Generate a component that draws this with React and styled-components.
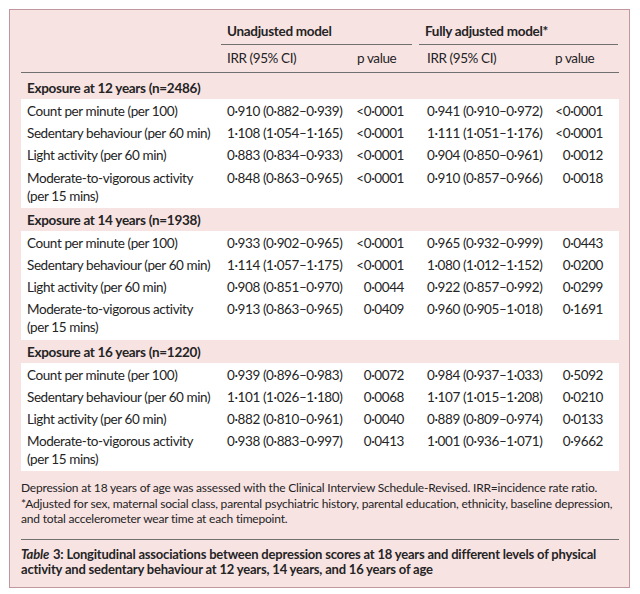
import React from "react";
import styled, { createGlobalStyle } from "styled-components";

const Global = createGlobalStyle`
  html, body { margin: 0; padding: 0; background: #ffffff; }
  body { font-family: Lato, "Open Sans", sans-serif; color: #242424; }
`;

const Page = styled.div`
  padding: 9px 0 0 9px;
  width: 640px;
  height: 594px;
  box-sizing: border-box;
`;

const Card = styled.div`
  width: 621px;
  box-sizing: border-box;
  background: #f8e3e3;
  border: 1px solid #bf979c;
  padding: 0 10px 10px 11px;
`;

const COLS = "200px 125px 52px 23px 125px 51px";

const GroupHead = styled.div`
  display: flex;
  padding-left: 200px;
  padding-top: 12px;
  gap: 7px;
`;

const GroupTitle = styled.div`
  width: ${(p) => p.$w}px;
  font-weight: 700;
  font-size: 13.5px;
  letter-spacing: -0.3px;
  line-height: 18px;
  padding: 0 0 4px 6px;
  border-bottom: 1px solid #707070;
`;

const SubHead = styled.div`
  display: grid;
  grid-template-columns: ${COLS};
  padding: 4px 0 5px 6px;
  font-size: 13.5px;
  letter-spacing: -0.4px;
  line-height: 18px;
  border-bottom: 1px solid #707070;
`;

const SubCell = styled.div`
  grid-column: ${(p) => p.$col};
  padding-left: ${(p) => p.$pl || 0}px;
`;

const Band = styled.div`
  font-weight: 700;
  font-size: 13.5px;
  letter-spacing: -0.3px;
  line-height: 18px;
  padding: ${(p) => (p.$first ? "6px" : "3px")} 6px 2px;
`;

const Block = styled.div`
  background: #ffffff;
  padding: 1px 0 1px 6px;
`;

const Row = styled.div`
  display: grid;
  grid-template-columns: ${COLS};
  font-size: 13.5px;
  letter-spacing: -0.4px;
  line-height: 18px;
  padding: 2.1px 0;
`;

const Label = styled.div`
  white-space: pre-line;
`;

const Num = styled.div`
  grid-column: ${(p) => p.$col};
  text-align: ${(p) => (p.$right ? "right" : "left")};
  white-space: nowrap;
`;

const Notes = styled.div`
  font-size: 12px;
  line-height: 15.5px;
  padding: 9px 0 12px;
  border-bottom: 1px solid #707070;
  letter-spacing: -0.2px;
`;

const Caption = styled.div`
  font-size: 13px;
  font-weight: 700;
  line-height: 15px;
  letter-spacing: -0.2px;
  padding-top: 7px;
  em { font-style: italic; margin-right: 1px; }
`;

const MVPA = "Moderate-to-vigorous activity\n(per 15 mins)";

const groups = [
  {
    title: "Exposure at 12 years (n=2486)",
    rows: [
      ["Count per minute (per 100)", "0·910 (0·882–0·939)", "<0·0001", "0·941 (0·910–0·972)", "<0·0001"],
      ["Sedentary behaviour (per 60 min)", "1·108 (1·054–1·165)", "<0·0001", "1·111 (1·051–1·176)", "<0·0001"],
      ["Light activity (per 60 min)", "0·883 (0·834–0·933)", "<0·0001", "0·904 (0·850–0·961)", "0·0012"],
      [MVPA, "0·848 (0·863–0·965)", "<0·0001", "0·910 (0·857–0·966)", "0·0018"],
    ],
  },
  {
    title: "Exposure at 14 years (n=1938)",
    rows: [
      ["Count per minute (per 100)", "0·933 (0·902–0·965)", "<0·0001", "0·965 (0·932–0·999)", "0·0443"],
      ["Sedentary behaviour (per 60 min)", "1·114 (1·057–1·175)", "<0·0001", "1·080 (1·012–1·152)", "0·0200"],
      ["Light activity (per 60 min)", "0·908 (0·851–0·970)", "0·0044", "0·922 (0·857–0·992)", "0·0299"],
      [MVPA, "0·913 (0·863–0·965)", "0·0409", "0·960 (0·905–1·018)", "0·1691"],
    ],
  },
  {
    title: "Exposure at 16 years (n=1220)",
    rows: [
      ["Count per minute (per 100)", "0·939 (0·896–0·983)", "0·0072", "0·984 (0·937–1·033)", "0·5092"],
      ["Sedentary behaviour (per 60 min)", "1·101 (1·026–1·180)", "0·0068", "1·107 (1·015–1·208)", "0·0210"],
      ["Light activity (per 60 min)", "0·882 (0·810–0·961)", "0·0040", "0·889 (0·809–0·974)", "0·0133"],
      [MVPA, "0·938 (0·883–0·997)", "0·0413", "1·001 (0·936–1·071)", "0·9662"],
    ],
  },
];

export default function App() {
  return (
    <>
      <Global />
      <Page>
        <Card>
          <GroupHead>
            <GroupTitle $w={185}>Unadjusted model</GroupTitle>
            <GroupTitle $w={193}>Fully adjusted model*</GroupTitle>
          </GroupHead>
          <SubHead>
            <SubCell $col={2}>IRR (95% CI)</SubCell>
            <SubCell $col={3} $pl={5}>p value</SubCell>
            <SubCell $col={5}>IRR (95% CI)</SubCell>
            <SubCell $col={6} $pl={3}>p value</SubCell>
          </SubHead>
          {groups.map((g, gi) => (
            <React.Fragment key={g.title}>
              <Band $first={gi === 0}>{g.title}</Band>
              <Block>
                {g.rows.map((r, ri) => (
                  <Row key={ri}>
                    <Label>{r[0]}</Label>
                    <Num $col={2}>{r[1]}</Num>
                    <Num $col={3} $right>{r[2]}</Num>
                    <Num $col={5}>{r[3]}</Num>
                    <Num $col={6} $right>{r[4]}</Num>
                  </Row>
                ))}
              </Block>
            </React.Fragment>
          ))}
          <Notes>
            Depression at 18 years of age was assessed with the Clinical Interview Schedule-Revised. IRR=incidence rate ratio.
            <br />
            *Adjusted for sex, maternal social class, parental psychiatric history, parental education, ethnicity, baseline depression,
            and total accelerometer wear time at each timepoint.
          </Notes>
          <Caption>
            <em>Table</em> 3: Longitudinal associations between depression scores at 18 years and different levels of physical
            activity and sedentary behaviour at 12 years, 14 years, and 16 years of age
          </Caption>
        </Card>
      </Page>
    </>
  );
}
